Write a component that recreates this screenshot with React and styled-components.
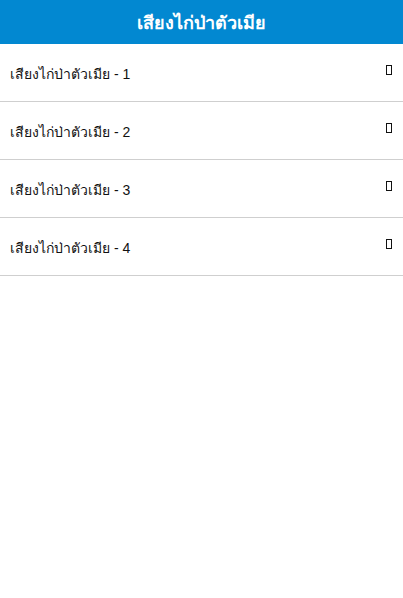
import styled, { createGlobalStyle } from 'styled-components';

const GlobalStyle = createGlobalStyle`
  body {
    margin: 0;
    background: #fff;
    font-family: "Liberation Sans", Arial, sans-serif;
  }
`;

const Header = styled.header`
  height: 44px;
  background: #0288d1;
  color: #fff;
  display: flex;
  align-items: center;
  justify-content: center;
  font-size: 18px;
  font-weight: 700;
`;

const List = styled.ul`
  list-style: none;
  margin: 0;
  padding: 0;
`;

const Row = styled.li`
  height: 57px;
  display: flex;
  align-items: center;
  justify-content: space-between;
  padding: 0 11px 0 10px;
  border-bottom: 1px solid #cfcfcf;
  font-size: 14px;
  color: #111;
`;

const Label = styled.span`
  padding-top: 3px;
`;

// missing-glyph box as shown in the screenshot
const Tofu = styled.span`
  width: 4px;
  height: 8px;
  border: 1px solid #111;
  margin-bottom: 6px;
`;

const items = [1, 2, 3, 4];

const App = () => (
  <>
    <GlobalStyle />
    <Header>เสียงไก่ป่าตัวเมีย</Header>
    <List>
      {items.map((n) => (
        <Row key={n}>
          <Label>เสียงไก่ป่าตัวเมีย - {n}</Label>
          <Tofu />
        </Row>
      ))}
    </List>
  </>
);

export default App;
